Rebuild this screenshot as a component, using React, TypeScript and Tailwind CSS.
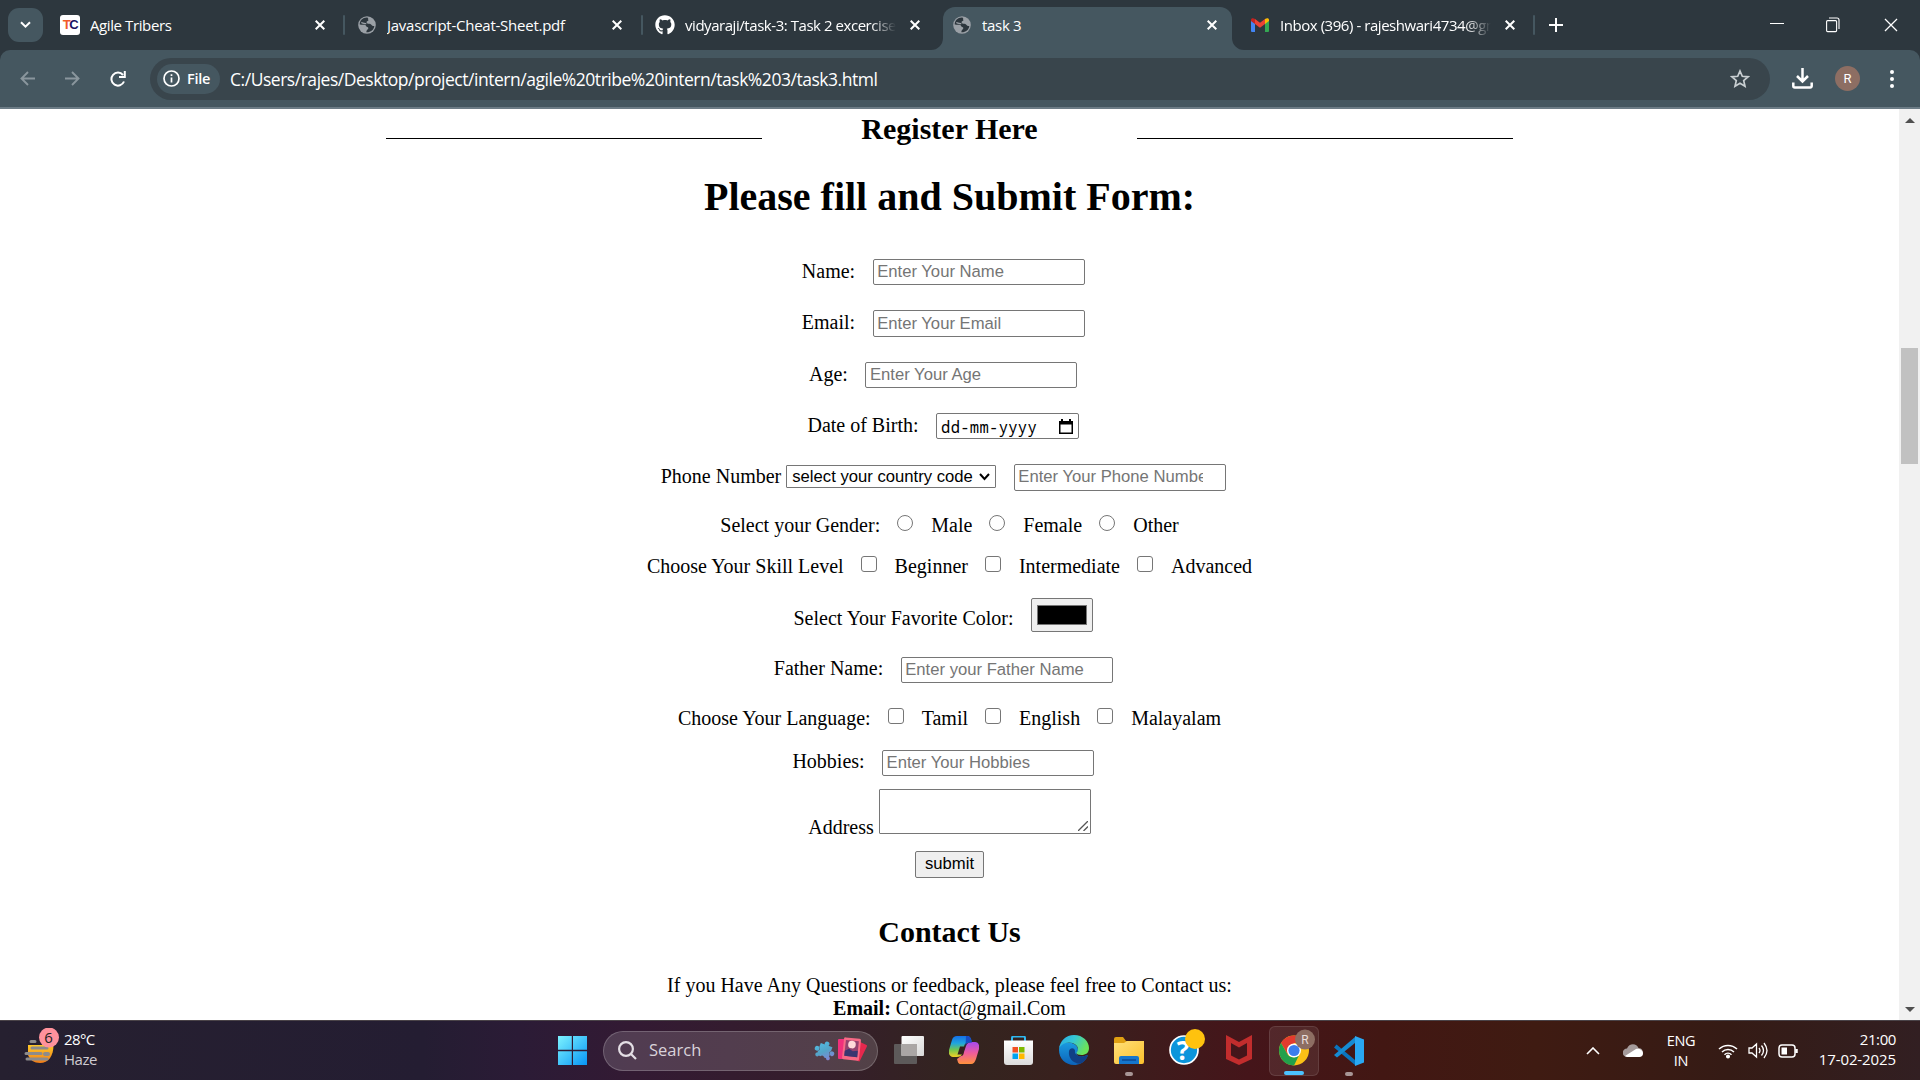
import React from "react";
import { FaGithub } from "react-icons/fa";

const ui = "font-['Open_Sans','Noto_Sans',sans-serif]";

function X({ s = 10, w = 2 }: { s?: number; w?: number }) {
  return (
    <svg width={s} height={s} viewBox="0 0 10 10" fill="none" stroke="#fff" strokeWidth={w} className="shrink-0">
      <path d="M0.7 0.7L9.3 9.3M9.3 0.7L0.7 9.3" />
    </svg>
  );
}

function Globe() {
  return (
    <svg width="18" height="18" viewBox="0 0 18 18" className="shrink-0">
      <circle cx="9" cy="9" r="8.8" fill="#9aa0a6" />
      <path d="M9.5 1.6C5 1.2 1.8 4.5 1.7 8.6c1.5.3 3.5-.2 5 .2 1.700.4 1 1.800 2.400 2.200 1.300.4 1.500 1.200.9 2.100-.5.800-1.600 1-1.700 3.200 4.300.2 7.600-2.300 8-6.300-1.300.2-2.200-.3-3-1.300-1.100-1.300-2.700-.9-3.900-1.300-1.300-.5-1.100-2.100.2-2.400 1.500-.4 1.200-1.500-.1-3.400z" fill="#2c363d" />
      <path d="M3.300 6.500c1.500 1 3.500 1 5 1.200M10.500 3.200c.9.900 2.700.5 3.200 2.200" stroke="#9aa0a6" strokeWidth="1.300" fill="none" />
    </svg>
  );
}

function Gmail() {
  return (
    <svg width="18" height="14" viewBox="0 0 18 14" className="shrink-0">
      <path d="M0 2.500V13a1 1 0 0 0 1 1h3V5z" fill="#4285f4" />
      <path d="M18 2.500V13a1 1 0 0 1-1 1h-3V5z" fill="#34a853" />
      <path d="M14 1v5l4-3V2c0-2-2-2.500-4-1z" fill="#fbbc04" />
      <path d="M0 2v1l4 3V1C2-.5 0 0 0 2z" fill="#c5221f" />
      <path d="M4 1v5l5 3.800L14 6V1L9 4.800z" fill="#ea4335" />
    </svg>
  );
}

function Tab({ icon, title, className, textClass, closeClass = "ml-[13px]" }: { icon: React.ReactNode; title: string; className: string; textClass: string; closeClass?: string }) {
  return (
    <div className={"flex h-[50px] shrink-0 items-center text-[15px] text-white " + className}>
      <div className="flex w-[20px] shrink-0 justify-center">{icon}</div>
      <div className={"ml-[10px] w-[212px] overflow-hidden whitespace-nowrap " + textClass}>{title}</div>
      <div className={"flex " + closeClass}><X s={10} w={2} /></div>
    </div>
  );
}

function Divider() {
  return <div className="mt-[15px] h-[20px] w-[2px] shrink-0 rounded bg-[#455760]" />;
}

const fade = "[mask-image:linear-gradient(to_right,black_186px,transparent_211px)]";

function Browser() {
  return (
    <>
      <div className="flex h-[50px] bg-[#2d373e]">
        <div className="mt-[8px] ml-[8px] flex h-[34px] w-[35px] items-center justify-center rounded-[11px] bg-[#455760]">
          <svg width="11" height="8" viewBox="0 0 11 8" fill="none" stroke="#fff" strokeWidth="2"><path d="M1 1.200l4.500 4.500L10 1.200" /></svg>
        </div>
        <Tab
          className="ml-[17px] w-[283px]"
          textClass="tracking-[-0.4px]"
          title="Agile Tribers"
          icon={
            <div className="flex h-[20px] w-[20px] items-center justify-center rounded-[3px] bg-white font-['Liberation_Sans',sans-serif] text-[13px] font-bold tracking-[-1.500px]">
              <span className="text-[#f15a29]">T</span><span className="text-[#1b1464]">C</span>
            </div>
          }
        />
        <Divider />
        <Tab className="ml-[12px] w-[284px]" textClass="tracking-[-0.25px]" title="Javascript-Cheat-Sheet.pdf" icon={<Globe />} />
        <Divider />
        <Tab className="ml-[12px] w-[274px]" textClass={"tracking-[-0.45px] " + fade} title="vidyaraji/task-3: Task 2 excercises" icon={<FaGithub size={20} />} />
        <div className="relative mt-[7px] ml-[14px] h-[43px] w-[289px] shrink-0 rounded-t-[12px] bg-[#455760]">
          <svg className="absolute bottom-0 -left-[12px]" width="12" height="12"><path d="M12 0v12H0A12 12 0 0 0 12 0z" fill="#455760" /></svg>
          <svg className="absolute -right-[12px] bottom-0" width="12" height="12"><path d="M0 0v12h12A12 12 0 0 1 0 0z" fill="#455760" /></svg>
          <Tab className="-mt-[7px] ml-[9px]" textClass="tracking-[-0.3px]" title="task 3" icon={<Globe />} />
        </div>
        <Tab className="ml-[18px] w-[283px]" textClass={"tracking-[-0.45px] " + fade} title="Inbox (396) - rajeshwari4734@gmail.com" icon={<Gmail />} />
        <Divider />
        <svg className="mt-[18px] ml-[14px]" width="14" height="14" stroke="#fff" strokeWidth="2"><path d="M7 0v14M0 7h14" /></svg>
        <div className="ml-auto flex h-[49px] items-center pr-[22px]">
          <div className="mb-[3px] h-px w-[14px] bg-white" />
          <svg className="ml-[42px]" width="14" height="16" fill="none" stroke="#fff" strokeWidth="1.100"><rect x=".6" y="3.600" width="10" height="11" rx="1" /><path d="M3 1h8a2 2 0 0 1 2 2v9" /></svg>
          <div className="ml-[44px] flex"><X s={14} w={0.9} /></div>
        </div>
      </div>
      <div className="bg-[#2d373e]">
        <div className="flex h-[59px] items-center rounded-t-[10px] border-b-2 border-[#6c7c86] bg-[#455760]">
          <svg className="ml-[20px]" width="15" height="15" fill="none" stroke="#8a969d" strokeWidth="1.900"><path d="M15 7.500H1.500M8 1L1.500 7.500 8 14" /></svg>
          <svg className="ml-[30px]" width="15" height="15" fill="none" stroke="#8a969d" strokeWidth="1.900"><path d="M0 7.500h13.500M7 1l6.500 6.500L7 14" /></svg>
          <svg className="ml-[30px]" width="16" height="16" fill="none" stroke="#fff" strokeWidth="2"><path d="M14 10.500A6.500 6.500 0 1 1 13 4M14.800 0v6H9" /></svg>
          <div className="ml-[24px] flex h-[42px] w-[1620px] items-center rounded-full bg-[#39454c]">
            <div className="ml-[7px] flex h-[30px] w-[63px] items-center rounded-full bg-[#455760]">
              <svg className="ml-[6px]" width="17" height="17" fill="none" stroke="#fff" strokeWidth="1.700"><circle cx="8.500" cy="8.500" r="7.500" /><path d="M8.500 7.500v5M8.500 4.300v1.800" /></svg>
              <span className="ml-[7px] text-[14.500px] font-semibold tracking-[-0.3px] text-white">File</span>
            </div>
            <span className="mt-[2px] ml-[10px] text-[17.500px] tracking-[-0.465px] whitespace-nowrap text-white">C:/Users/rajes/Desktop/project/intern/agile%20tribe%20intern/task%203/task3.html</span>
            <svg className="mr-[20px] ml-auto" width="20" height="20" viewBox="0 0 20 20" fill="none" stroke="#c9cfd2" strokeWidth="1.700"><path d="M10 2l2.300 5.300 5.700.5-4.300 3.800 1.300 5.700-5-3-5 3 1.300-5.700L2 7.800l5.700-.5z" /></svg>
          </div>
          <svg className="ml-[22px]" width="21" height="21" fill="none" stroke="#fff" strokeWidth="2.500"><path d="M10.500 0v13M5 8l5.500 5.500L16 8M1.300 14.500V18a1.500 1.500 0 0 0 1.500 1.500h15.400a1.500 1.500 0 0 0 1.500-1.500v-3.500" /></svg>
          <div className="ml-[22px] flex h-[25px] w-[25px] items-center justify-center rounded-full bg-[#8d6e63] font-[Roboto,sans-serif] text-[13px] text-white">R</div>
          <svg className="ml-[30px]" width="4" height="18" fill="#fff"><circle cx="2" cy="2" r="2" /><circle cx="2" cy="9" r="2" /><circle cx="2" cy="16" r="2" /></svg>
        </div>
      </div>
    </>
  );
}

function Row({ className, children }: { className: string; children: React.ReactNode }) {
  return <div className={"flex shrink-0 items-start justify-center leading-[23px] whitespace-nowrap " + className}>{children}</div>;
}

function Input({ text, className = "h-[26px] pt-px", clip = false }: { text: string; className?: string; clip?: boolean }) {
  return (
    <div className={"mr-[12.5px] ml-[17.5px] w-[212px] rounded-[2px] border border-[#767676] pl-[3.5px] font-['Liberation_Sans',sans-serif] text-[16.67px] leading-[22px] text-[#757575] " + className}>
      <div className={clip ? "w-[185px] overflow-hidden" : ""}>{text}</div>
    </div>
  );
}

function Choices({ items, round = false }: { items: string[]; round?: boolean }) {
  return (
    <>
      {items.map((t) => (
        <React.Fragment key={t}>
          <div className={"mt-px mr-[18px] ml-[17px] h-[16px] w-[16px] border border-[#767676] " + (round ? "rounded-full" : "rounded-[3px]")} />
          <span>{t}</span>
        </React.Fragment>
      ))}
    </>
  );
}

function Page() {
  return (
    <main className="flex h-[911px] bg-white font-['Liberation_Serif',serif] text-[20px] text-black">
      <div className="flex h-[911px] w-[1899px] flex-col overflow-hidden">
        <div className="flex h-[55px] justify-center pt-[3px]">
          <div className="mt-[26px] h-px w-[376px] bg-black" />
          <h2 className="w-[375px] text-center text-[30px] leading-[34px] font-bold">Register Here</h2>
          <div className="mt-[26px] h-px w-[376px] bg-black" />
        </div>
        <h1 className="h-[95px] pt-[10px] text-center text-[40px] leading-[46px] font-bold">Please fill and Submit Form:</h1>
        <Row className="h-[51px]"><span className="mt-px">Name:</span><Input text="Enter Your Name" /></Row>
        <Row className="h-[52px]"><span className="mt-px">Email:</span><Input className="h-[27px] pt-[2px]" text="Enter Your Email" /></Row>
        <Row className="h-[51px]"><span className="mt-px">Age:</span><Input text="Enter Your Age" /></Row>
        <Row className="h-[51px]">
          <span className="mt-px">Date of Birth:</span>
          <div className="mr-[12.5px] ml-[17.5px] flex h-[26px] w-[143px] justify-between rounded-[2px] border border-[#767676] pr-[5px] pl-[4px]">
            <span className="font-['Noto_Sans_Mono','DejaVu_Sans_Mono',monospace] text-[15.500px] leading-[26px] tracking-[0.3px]">dd-mm-yyyy</span>
            <svg className="mt-[5px]" width="14" height="15"><path d="M0 2h14v13H0zM1.500 5.500v8h11v-8z" fillRule="evenodd" /><path d="M2 0h2v2H2zM10 0h2v2h-2z" /></svg>
          </div>
        </Row>
        <Row className="h-[50px]">
          <span className="mt-px">Phone Number</span>
          <div className="mt-px ml-[5px] flex h-[23px] w-[210px] items-center justify-between rounded-[1px] border border-[#767676] pr-[5px] pl-[5px] font-['Liberation_Sans',sans-serif] text-[16.67px]">
            <span className="leading-[21px]">select your country code</span>
            <svg width="11" height="8" fill="none" stroke="#000" strokeWidth="2"><path d="M1 1l4.500 5L10 1" /></svg>
          </div>
          <Input className="h-[27px] pt-px" clip text="Enter Your Phone Number" />
        </Row>
        <Row className="h-[41px]"><span>Select your Gender:</span><Choices round items={["Male", "Female", "Other"]} /></Row>
        <Row className="h-[41px]"><span>Choose Your Skill Level</span><Choices items={["Beginner", "Intermediate", "Advanced"]} /></Row>
        <Row className="h-[61px] pt-[2px]">
          <span className="mt-[9px]">Select Your Favorite Color:</span>
          <div className="mr-[12.5px] ml-[17.5px] h-[34px] w-[62px] rounded-[2px] border border-[#767676] bg-[#efefef] px-[5px] py-[6px]">
            <div className="h-[20px] border border-[#767676] bg-black" />
          </div>
        </Row>
        <Row className="h-[50px]"><span>Father Name:</span><Input text="Enter your Father Name" /></Row>
        <Row className="h-[43px]"><span>Choose Your Language:</span><Choices items={["Tamil", "English", "Malayalam"]} /></Row>
        <Row className="h-[39px]"><span>Hobbies:</span><Input text="Enter Your Hobbies" /></Row>
        <Row className="h-[62px]">
          <span className="mt-[27px]">Address</span>
          <div className="ml-[5px] flex h-[45px] w-[212px] items-end justify-end rounded-[1px] border border-[#767676] p-[2px]">
            <svg width="10" height="10" fill="none" stroke="#555" strokeWidth="1.300"><path d="M0 10L10 0M5.500 10L10 5.500" /></svg>
          </div>
        </Row>
        <Row className="h-[64px]">
          <div className="h-[27px] w-[69px] rounded-[2px] border border-[#767676] bg-[#efefef] text-center font-['Liberation_Sans',sans-serif] text-[16.67px] leading-[23px]">submit</div>
        </Row>
        <h2 className="h-[59px] text-center text-[30px] leading-[34px] font-bold">Contact Us</h2>
        <p className="text-center leading-[23px]">If you Have Any Questions or feedback, please feel free to Contact us:<br /><b>Email:</b> Contact@gmail.Com</p>
      </div>
      <div className="flex w-[21px] flex-col items-center bg-[#f1f1f1]">
        <svg className="mt-[9px]" width="10" height="5"><path d="M5 0l5 5H0z" fill="#505050" /></svg>
        <div className="mt-[225px] h-[116px] w-[17px] bg-[#c1c1c1]" />
        <svg className="mt-auto mb-[8px]" width="10" height="5"><path d="M0 0h10L5 5z" fill="#505050" /></svg>
      </div>
    </main>
  );
}

function AppIcon({ children, mark = "", active = false, className = "" }: { children: React.ReactNode; mark?: string; active?: boolean; className?: string }) {
  return (
    <div className={"relative flex h-[50px] w-[50px] shrink-0 items-center justify-center rounded-[6px] " + (active ? "border border-white/10 bg-white/8 " : "") + className}>
      {children}
      {mark && <div className={"absolute bottom-0 h-[4px] rounded-full " + mark} />}
    </div>
  );
}

function Defs() {
  return (
    <defs>
      <linearGradient id="win" x1="0" y1="0" x2="1" y2="1"><stop stopColor="#7df3ff" /><stop offset="1" stopColor="#0795f5" /></linearGradient>
      <linearGradient id="sun" x1="0" y1="0" x2="0" y2="1"><stop stopColor="#ffc928" /><stop offset="1" stopColor="#f07c18" /></linearGradient>
      <linearGradient id="puz" gradientUnits="userSpaceOnUse" x1="2" y1="2" x2="20" y2="20"><stop stopColor="#4fc0e8" /><stop offset=".5" stopColor="#54a4c8" /><stop offset="1" stopColor="#8c7dd8" /></linearGradient>
      <linearGradient id="tv1" x1="0" y1="0" x2="1" y2="1"><stop stopColor="#fff" /><stop offset="1" stopColor="#d8d8d8" /></linearGradient>
      <linearGradient id="copA" x1="0" y1="0" x2="0" y2="1"><stop stopColor="#1570e8" /><stop offset=".35" stopColor="#20a5dd" /><stop offset=".65" stopColor="#70c651" /><stop offset="1" stopColor="#f4cf24" /></linearGradient>
      <linearGradient id="copB" x1="0" y1="0" x2="0" y2="1"><stop stopColor="#a54af0" /><stop offset=".5" stopColor="#ee5b9c" /><stop offset="1" stopColor="#ff923c" /></linearGradient>
      <linearGradient id="edgeA" x1="0" y1="0" x2="1" y2=".4"><stop stopColor="#26a8e8" /><stop offset=".5" stopColor="#35c7d4" /><stop offset="1" stopColor="#6be35b" /></linearGradient>
      <linearGradient id="edgeB" x1="0" y1="0" x2="0" y2="1"><stop stopColor="#1a9be0" /><stop offset="1" stopColor="#0c62b8" /></linearGradient>
      <linearGradient id="fold" x1="0" y1="0" x2="1" y2="1"><stop stopColor="#ffe07a" /><stop offset="1" stopColor="#fbc02c" /></linearGradient>
      <linearGradient id="bag" x1="0" y1="0" x2="0" y2="1"><stop stopColor="#fff" /><stop offset="1" stopColor="#dcdcdc" /></linearGradient>
    </defs>
  );
}

function Taskbar() {
  return (
    <footer className="flex h-[60px] items-center border-t border-[#4a4348] bg-[linear-gradient(90deg,#262030_0%,#241d32_22%,#2b1b36_27%,#331a33_33%,#351e2b_43%,#33241f_50%,#38211e_55%,#45151a_65%,#421713_72%,#3f1b12_80%,#351b15_90%,#321f22_100%)] text-white">
      <svg className="ml-[24px]" width="36" height="46" viewBox="0 7 36 46">
        <Defs />
        <path d="M4 24h25.500c0 11-5 18-13.500 18C10 42 6 39 4 34z" fill="url(#sun)" />
        <path d="M7 20.500h4M8 27h15M2 32.500h15M3 38h20" stroke="#8d8b8b" strokeWidth="3" strokeLinecap="round" />
        <rect x="19" y="31" width="7" height="4" rx="2" fill="#8d8b8b" />
        <circle cx="25" cy="16.500" r="10" fill="#ff929c" />
        <text x="24.500" y="22" textAnchor="middle" fontSize="15" fill="#222" fontFamily="Open Sans">6</text>
      </svg>
      <div className="mb-[4px] ml-[4px] w-[494px] text-[15px] leading-[20px] tracking-[-0.5px]"><span className="tracking-[-0.6px]">28°C</span><br /><span className="text-[#cfcbd1]">Haze</span></div>
      <svg width="29" height="29"><path d="M0 0h13.800v13.800H0zM15 0h14v13.800H15zM0 15.200h13.800V29H0zM15 15.200h14V29H15z" fill="url(#win)" /></svg>
      <div className="ml-[16px] flex h-[40px] w-[275px] items-center rounded-full border border-white/20 bg-white/15">
        <svg className="ml-[14px]" width="19" height="19" fill="none" stroke="#e4dfe5" strokeWidth="2.200"><circle cx="8" cy="8" r="6.900" /><path d="M13 13l5 5" /></svg>
        <span className="ml-[12px] text-[16.500px] text-[#d9d3da]">Search</span>
        <svg className="ml-auto" width="21" height="22" viewBox="0 0 22 22">
          <g transform="rotate(20 11 11)" fill="url(#puz)">
            <path d="M4.500 4.500h13v4.500a2.200 2.200 0 0 0 0 4v4.500H13a2.200 2.200 0 0 0-4 0H4.500V13a2.200 2.200 0 0 0 0-4z" />
            <circle cx="11" cy="3.200" r="2.500" />
            <circle cx="19.200" cy="11" r="2.500" />
            <circle cx="2.800" cy="11" r="2.500" />
            <circle cx="5" cy="17" r="2" />
            <circle cx="17" cy="17" r="2" />
          </g>
        </svg>
        <svg className="mr-[9px] ml-[2px]" width="31" height="27" viewBox="0 0 31 27">
          <rect x="1" y="2" width="15" height="20" rx="1" fill="#f0307c" />
          <rect x="15" y="5" width="12" height="18" rx="1" transform="rotate(26 21 14)" fill="#e6284d" />
          <g transform="rotate(6 14 12)"><rect x="6" y="1" width="17" height="22" rx="1.500" fill="#f76a86" /><rect x="8" y="3.500" width="13" height="16" fill="#94426f" /><circle cx="14.500" cy="7.500" r="3.800" fill="#ffd9da" /><path d="M8 19.500v-5l4-2.500 4 2 5-1v6.500z" fill="#3a3670" /></g>
        </svg>
      </div>
      <div className="ml-[6px] flex items-center gap-[5px]">
        <AppIcon className="-mt-px"><svg width="30" height="28"><rect y="8" width="23" height="20" rx="1" fill="#5d5a5a" /><rect x="7.500" y="0" width="22.500" height="20" rx="1" fill="url(#tv1)" /><path d="M7.500 8H23v12H7.500z" fill="#aaa6a5" /></svg></AppIcon>
        <AppIcon className="-mt-[2px]">
          <svg width="30" height="28" viewBox="0 0 30 28">
            <path d="M8 0h10c3 0 4 2 4.500 5l-4 2c-3 0-3 2-4 6l-1 4c-1 3-3 4-6 4H4c-3 0-5-3-4-7L3 4c1-3 2.500-4 5-4z" fill="url(#copA)" />
            <path d="M22 28H12c-3 0-3-2-4-5l4-3c2 0 2.500-1.500 3-4l2-6c1-3 3-4 6-4h3c3 0 5 3 4 7l-3 10c-1 3-2.500 5-5 5z" fill="url(#copB)" />
            <path d="M11 10.500h5l-2.500 8h-5z" fill="#35201f" />
            <path d="M17 0h1c3 0 4 2 5 6.500h-3c-2 0-3 1.500-3.500 3.500z" fill="#174cc4" />
          </svg>
        </AppIcon>
        <AppIcon className="-mt-px">
          <svg className="-ml-px" width="29" height="29" viewBox="0 0 29 29"><path d="M8 6V2a1.500 1.500 0 0 1 1.500-1.500h10A1.500 1.500 0 0 1 21 2v4" fill="none" stroke="#2fb8f0" strokeWidth="2" /><path d="M0 4.500h29V26a3 3 0 0 1-3 3H3a3 3 0 0 1-3-3z" fill="url(#bag)" /><path d="M8.500 11H14v5.500H8.500z" fill="#f25022" /><path d="M15 11h5.500v5.500H15z" fill="#7fba00" /><path d="M8.500 17.500H14V23H8.500z" fill="#00a4ef" /><path d="M15 17.500h5.500V23H15z" fill="#ffb900" /></svg>
        </AppIcon>
        <AppIcon className="-mt-px">
          <svg width="30" height="30" viewBox="0 0 30 30">
            <path d="M0 15C0 9 5 7 10 7.500c6 .5 9 4 9 7.500 0 2-1.500 3-1.500 4 0 2 4 3 6 2.500 2-.3 3.500-1 4.500-1.500 1 0 .5 1.500-.5 3C25 27.500 20 30 15 30 6.500 30 0 23.500 0 15z" fill="url(#edgeB)" />
            <path d="M10 16c-1 7 4 12.500 11 12.700 3-1 5-3 6.500-5.200 1.200-2 1.500-3.500.5-3.500-3 1.800-7 2-9.500.5-2-1-3-3-2.500-5-1-3-5-3-6 .5z" fill="#103f85" />
            <path d="M0 14C.8 6 7 0 15 0c9 0 15 6.500 15 13 0 5-3.500 7-7.500 7-3 0-5-1-5-2 0-1 1.500-1.500 1.500-4 0-3.500-4-6.500-9-6.500-5 0-9 3-10 6.500z" fill="url(#edgeA)" />
          </svg>
        </AppIcon>
        <AppIcon mark="w-[8px] bg-[#a89696]">
          <svg width="30" height="27" viewBox="0 0 30 27"><path d="M0 2a2 2 0 0 1 2-2h7l3 4h18v10H0z" fill="#e0a012" /><path d="M0 6h10l3-2h17v21a2 2 0 0 1-2 2H2a2 2 0 0 1-2-2z" fill="url(#fold)" /><path d="M5 27v-6a2 2 0 0 1 2-2h16a2 2 0 0 1 2 2v6z" fill="#1576cd" /><path d="M8 23h14" stroke="#0b4a94" strokeWidth="1.500" /></svg>
        </AppIcon>
        <AppIcon>
          <svg className="-mt-[6px] ml-[6px]" width="36" height="37" viewBox="0 0 36 37"><circle cx="15" cy="21" r="14" fill="#0b95db" stroke="#fff" strokeWidth="1.700" /><text x="14" y="30.500" textAnchor="middle" fontSize="26" fontWeight="700" fill="#fff" fontFamily="Open Sans">?</text><circle cx="26" cy="10" r="10" fill="#ffc20e" /></svg>
        </AppIcon>
        <AppIcon><svg className="-mt-px -ml-px" width="26" height="30" viewBox="0 0 26 30"><path d="M0 0l13 7L26 0v24l-13 6-13-6zM5 8v12.500l8 4 8-4V8l-8 4.500z" fill="#c22d2d" fillRule="evenodd" /></svg></AppIcon>
        <AppIcon active mark="w-[20px] bg-[#4cc2ff]">
          <svg width="36" height="37" viewBox="0 0 36 37" className="-mt-[6px] ml-[6px]">
            <circle cx="15" cy="21.500" r="15" fill="#fbc116" />
            <path d="M2 14a15 15 0 0 1 26 0H15L8.500 25z" fill="#e33b2e" />
            <path d="M2 14l6.500 11.200c2 3.600 8 4.600 12 0L15 36.500C3 36.500-3.500 24 2 14z" fill="#22a04b" />
            <circle cx="15" cy="21.500" r="7" fill="#fff" /><circle cx="15" cy="21.500" r="5.600" fill="#3b7ded" />
            <circle cx="26" cy="10.500" r="10" fill="#8d6e63" /><text x="26" y="15" textAnchor="middle" fontSize="12" fill="#e8dedb" fontFamily="Roboto">R</text>
          </svg>
        </AppIcon>
        <AppIcon mark="w-[8px] bg-[#a89696]">
          <svg width="30" height="30" viewBox="0 0 30 30"><path d="M2.500 8.500L21 24v5L0 11.500z" fill="#0a74bd" /><path d="M0 19L21 1v6L3 21.500z" fill="#168bd2" /><path d="M21 0l9 3.500v23L21 30z" fill="#29a8f3" /></svg>
        </AppIcon>
      </div>
      <svg className="ml-auto" width="14" height="8" fill="none" stroke="#fff" strokeWidth="1.600"><path d="M1 7l6-6 6 6" /></svg>
      <svg className="ml-[23px]" width="20" height="13" viewBox="0 0 20 13"><path d="M4 13a4.200 4.200 0 0 1 0-8.500C6-1.500 14-1 15.500 4 19 4 20 7 20 9z" fill="#a59b9b" /><path d="M2 12l11-7c3-1 7 1 7 4.500 0 2-1.500 3.500-3.500 3.500H4z" fill="#fff" /></svg>
      <div className="ml-[22px] w-[32px] text-center text-[14.500px] leading-[20px] tracking-[-0.3px]">ENG<br />IN</div>
      <svg className="ml-[21px]" width="20" height="16" fill="none" stroke="#fff" strokeWidth="1.500"><path d="M1 6a13 13 0 0 1 18 0M4 9a8.700 8.700 0 0 1 12 0M6.500 11.700a5 5 0 0 1 7 0" /><circle cx="10" cy="13.500" r="1.300" fill="#fff" /></svg>
      <svg className="ml-[10px]" width="21" height="17" fill="none" stroke="#fff" strokeWidth="1.300"><path d="M1 6v5h3l4.500 4V2L4 6zM11 6q2 2.500 0 5M13.500 3.500q4 5 0 10M16 1q6 7.500 0 15" /></svg>
      <svg className="ml-[9px]" width="21" height="14" fill="none" stroke="#fff" strokeWidth="1.500"><rect x="1" y="1" width="16" height="12" rx="3" /><path d="M3.500 3.500H9v7H3.500z" fill="#fff" stroke="none" /><path d="M18.500 5v4" strokeWidth="2.500" /></svg>
      <div className="mr-[24px] mb-[4px] ml-[18px] w-[79px] text-right text-[15px] leading-[20px] tracking-[-0.1px] whitespace-nowrap"><span className="tracking-[-0.4px]">21:00</span><br />17-02-2025</div>
    </footer>
  );
}

export default function App() {
  return (
    <div className={"flex h-[1080px] w-[1920px] flex-col overflow-hidden " + ui}>
      <Browser />
      <Page />
      <Taskbar />
    </div>
  );
}
